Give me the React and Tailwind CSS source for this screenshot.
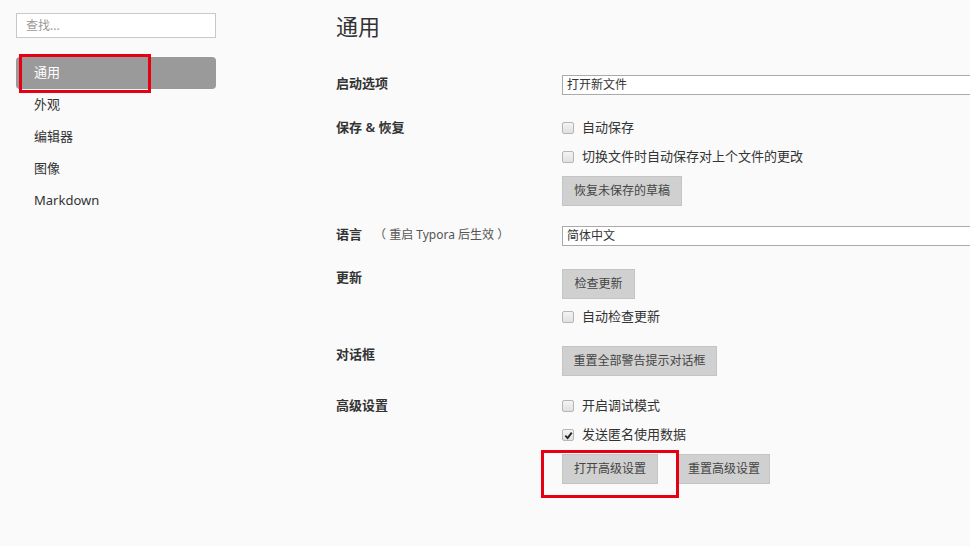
import { useState } from "react";

const font = "font-['Noto_Sans','Noto_Sans_CJK_SC',sans-serif]";

const navItems = ["通用", "外观", "编辑器", "图像", "Markdown"];

const Checkbox = ({ checked, label }) => (
  <label className="flex items-center h-[18px] text-[13px] text-[#333]">
    <span className="w-[12px] h-[12px] border border-[#b5b5b5] rounded-[2px] bg-gradient-to-b from-[#f4f4f4] to-[#e0e0e0] flex items-center justify-center">
      {checked && (
        <svg width="9" height="9" viewBox="0 0 10 10">
          <path d="M1.5 5.2 L4 7.8 L8.6 1.8" fill="none" stroke="#222" strokeWidth="2" />
        </svg>
      )}
    </span>
    <span className="ml-[8px]">{label}</span>
  </label>
);

const Button = ({ children, w }) => (
  <button
    className={`h-[30px] ${w} bg-[#d0d0d0] border border-[#c4c4c4] text-[12px] text-[#444] flex items-center justify-center`}
  >
    {children}
  </button>
);

const Select = ({ value }) => (
  <div className="h-[20px] w-[420px] bg-white border border-[#aaaaaa] text-[12px] text-[#333] pl-[4px] leading-[18px]">
    {value}
  </div>
);

const Row = ({ label, className = "", children }) => (
  <div className={`flex items-start ${className}`}>
    <div className="w-[226px] shrink-0 text-[13px] font-semibold text-[#333] leading-[18px] -mt-[1px]">
      {label}
    </div>
    <div className="flex flex-col items-start">{children}</div>
  </div>
);

const App = () => {
  const [active, setActive] = useState(0);

  return (
    <div className={`relative w-[970px] h-[546px] overflow-hidden bg-[#fafafa] flex ${font}`}>
      {/* sidebar */}
      <div className="w-[232px] shrink-0 pl-[16px] pr-[16px] pt-[13px]">
        <div className="h-[25px] w-[200px] bg-white border border-[#c8c8c8] text-[12px] text-[#999] pl-[9px] leading-[23px]">
          查找...
        </div>
        <div className="mt-[19px] flex flex-col">
          {navItems.map((item, i) => (
            <div
              key={item}
              onClick={() => setActive(i)}
              className={`h-[32px] w-[200px] pl-[18px] flex items-center text-[13px] rounded-[4px] ${
                active === i ? "bg-[#9a9a9a] text-white" : "text-[#333]"
              }`}
            >
              {item}
            </div>
          ))}
        </div>
      </div>

      {/* main */}
      <div className="flex-1 pl-[104px] pt-[11px]">
        <h1 className="text-[22px] leading-[30px] text-[#333]">通用</h1>

        <Row label="启动选项" className="mt-[34px]">
          <Select value="打开新文件" />
        </Row>

        <Row label="保存 & 恢复" className="mt-[24px]">
          <Checkbox label="自动保存" />
          <div className="mt-[11px]">
            <Checkbox label="切换文件时自动保存对上个文件的更改" />
          </div>
          <div className="mt-[10px]">
            <Button w="w-[120px]">恢复未保存的草稿</Button>
          </div>
        </Row>

        <Row
          label={
            <span>
              语言
              <span className="ml-[12px] font-normal text-[12px] text-[#555]">（ 重启 Typora 后生效 ）</span>
            </span>
          }
          className="mt-[20px]"
        >
          <Select value="简体中文" />
        </Row>

        <Row label="更新" className="mt-[23px]">
          <Button w="w-[73px]">检查更新</Button>
          <div className="mt-[9px]">
            <Checkbox label="自动检查更新" />
          </div>
        </Row>

        <Row label="对话框" className="mt-[20px]">
          <Button w="w-[155px]">重置全部警告提示对话框</Button>
        </Row>

        <Row label="高级设置" className="mt-[21px]">
          <Checkbox label="开启调试模式" />
          <div className="mt-[11px]">
            <Checkbox checked label="发送匿名使用数据" />
          </div>
          <div className="mt-[10px] flex gap-[20px]">
            <Button w="w-[96px]">打开高级设置</Button>
            <Button w="w-[92px]">重置高级设置</Button>
          </div>
        </Row>
      </div>

      {/* red annotation boxes */}
      <div className="absolute left-[19px] top-[54px] w-[132px] h-[39px] border-[3px] border-[#e60012]" />
      <div className="absolute left-[541px] top-[450px] w-[138px] h-[48px] border-[3px] border-[#e60012]" />
    </div>
  );
};

export default App;
